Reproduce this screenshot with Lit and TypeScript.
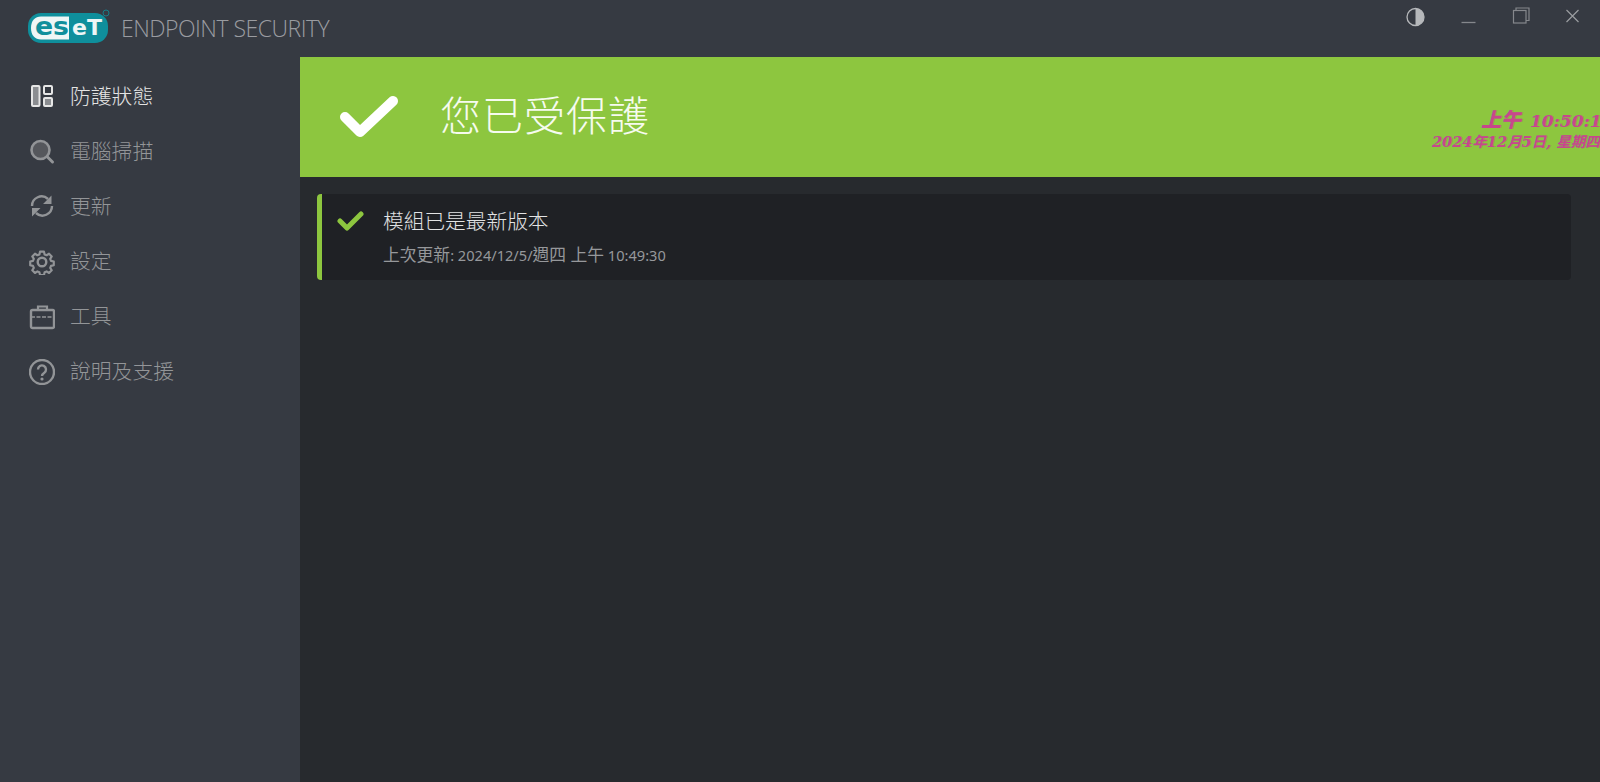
import {LitElement, html, css, svg} from 'lit';
import {customElement} from 'lit/decorators.js';

const navIcons = {
  status: svg`<rect x="3" y="2" width="7.500" height="20" rx="1" fill="#8b8d91" stroke="#e6e6e6" stroke-width="2"/><rect x="15" y="2" width="8" height="8" rx="1" fill="none" stroke="#e6e6e6" stroke-width="2"/><rect x="15" y="14" width="8" height="8" rx="1" fill="#8b8d91" stroke="#e6e6e6" stroke-width="2"/>`,
  scan: svg`<circle cx="11.500" cy="11" r="9" fill="#55575c" stroke="#929497" stroke-width="2.600"/><path d="M18.500 18l5 5" stroke="#929497" stroke-width="3" stroke-linecap="round"/>`,
  update: svg`<path d="M3 12a9.500 9.500 0 0 1 16-7M23 12a9.500 9.500 0 0 1-16 7" fill="none" stroke="#929497" stroke-width="2.400"/><path d="M22.500 1.500V10H14zM3 22.500V14h8.500z" fill="#929497"/>`,
  gear: svg`<circle cx="13" cy="13" r="4.300" fill="none" stroke="#929497" stroke-width="2.400"/><path d="M10.800 1.500h4.400l.7 3.100 2.200.9 2.700-1.700 3 3-1.700 2.700.9 2.200 3.100.7v4.200l-3.100.7-.9 2.200 1.700 2.700-3 3-2.700-1.700-2.200.9-.7 3.100h-4.400l-.7-3.100-2.200-.9-2.700 1.700-3-3 1.700-2.700-.9-2.200-3.100-.7v-4.200l3.100-.7.9-2.200-1.700-2.700 3-3 2.700 1.700 2.200-.9z" transform="translate(1.300 1.300) scale(.9)" fill="none" stroke="#929497" stroke-width="2.400" stroke-linejoin="round"/>`,
  tools: svg`<path d="M9 6V2.500h9V6" fill="none" stroke="#929497" stroke-width="2.200"/><rect x="2" y="6" width="23" height="18" rx="1.500" fill="none" stroke="#929497" stroke-width="2.400"/><path d="M2 13h23" stroke="#929497" stroke-width="1.500" stroke-dasharray="4 1.500"/>`,
  help: svg`<circle cx="13" cy="13" r="12" fill="none" stroke="#929497" stroke-width="2.400"/><path d="M9 10.500a4 4 0 1 1 6.300 3.200c-1.500 1-2.300 1.600-2.300 3.300" fill="none" stroke="#929497" stroke-width="2.400"/><circle cx="13" cy="20" r="1.600" fill="#929497"/>`,
};

const navItems = [
  {label: '防護狀態', icon: navIcons.status, active: true},
  {label: '電腦掃描', icon: navIcons.scan},
  {label: '更新', icon: navIcons.update},
  {label: '設定', icon: navIcons.gear},
  {label: '工具', icon: navIcons.tools},
  {label: '說明及支援', icon: navIcons.help},
];

@customElement('app-root')
class AppRoot extends LitElement {
  static override styles = css`
    :host {
      display: block;
      width: 1600px;
      height: 782px;
      overflow: hidden;
      font-family: 'Noto Sans', 'Noto Sans CJK TC', sans-serif;
      background: #272a2e;
    }

    .titlebar {
      height: 57px;
      background: #363a42;
      display: flex;
      align-items: center;
      padding-left: 28px;
    }

    .logo {
      width: 84px;
      height: 34px;
      margin-top: -5px;
      display: block;
      flex: none;
    }

    .product {
      margin-left: 9px;
      margin-top: -1px;
      font-family: 'Open Sans', sans-serif;
      font-weight: 300;
      font-size: 23px;
      letter-spacing: -0.5px;
      color: #9a9ca1;
    }

    .window-controls {
      margin-left: auto;
      display: flex;
      align-self: flex-start;
      padding-top: 7px;
      padding-right: 1px;
    }

    .window-controls svg {
      display: block;
      width: 53px;
      height: 20px;
    }

    .body {
      display: flex;
      height: 725px;
    }

    .sidebar {
      width: 300px;
      flex: none;
      background: #363a42;
      padding-top: 11px;
      box-sizing: border-box;
    }

    .nav-item {
      height: 55px;
      display: flex;
      align-items: center;
      padding-left: 29px;
      color: #939598;
      font-size: 20.800px;
      font-weight: 300;
    }

    .nav-item.active {
      color: #e4e4e4;
    }

    .nav-item span {
      margin-top: -2px;
    }

    .nav-icon {
      width: 26px;
      height: 26px;
      margin-right: 15px;
      margin-top: 2px;
      flex: none;
    }

    .main {
      flex: 1;
      min-width: 0;
    }

    .hero {
      height: 120px;
      background: #8dc63f;
      display: flex;
      align-items: center;
      padding-left: 39px;
      position: relative;
      overflow: hidden;
    }

    .hero-title {
      margin-left: 41px;
      margin-top: -9px;
      font-size: 41px;
      font-weight: 300;
      color: #f6fbef;
      letter-spacing: 1px;
    }

    .clock {
      position: absolute;
      left: 1132px;
      top: 53px;
      width: 300px;
      font-family: 'DejaVu Serif', 'Noto Sans CJK TC', serif;
      font-weight: bold;
      font-style: italic;
      color: #c8478c;
      text-shadow: 1px 0 0 rgba(122, 84, 176, 0.35);
      white-space: nowrap;
      line-height: 1;
    }

    .clock-time {
      font-size: 17px;
      padding-left: 49px;
    }

    .clock-time b {
      font-size: 20px;
      margin-right: 3px;
    }

    .clock-date {
      font-size: 14.500px;
      margin-top: 5px;
    }

    .card {
      margin: 17px 29px 0 17px;
      height: 86px;
      box-sizing: border-box;
      background: #1f2125;
      border-left: 5px solid #8dc63f;
      border-radius: 4px;
      display: flex;
      padding-left: 15px;
    }

    .card-check {
      margin-top: 16px;
      flex: none;
    }

    .card-text {
      margin-left: 19px;
      padding-top: 14px;
    }

    .card-title {
      font-size: 20.700px;
      line-height: 26px;
      color: #e2e3e4;
      font-weight: 300;
    }

    .card-sub {
      margin-top: 11px;
      font-size: 14.600px;
      line-height: 20px;
      color: #96989b;
    }

    .card-sub span {
      font-size: 16.800px;
    }
  `;

  override render() {
    return html`
      <div class="titlebar">
        <svg class="logo" viewBox="0 0 84 34">
          <rect x="0" y="4" width="80" height="30" rx="13" fill="#0f8f9c"/>
          <path d="M13 7.500h28v23H13c-6 0-10-4-10-11.500S7 7.500 13 7.500z" fill="#eef6f6"/>
          <circle cx="78" cy="4" r="3" fill="none" stroke="#0f8f9c" stroke-width=".8"/>
          <text x="7" y="26" font-family="DejaVu Sans" font-weight="700" font-size="24" fill="#0f8f9c" textLength="34" lengthAdjust="spacingAndGlyphs">es</text>
          <text x="44" y="26" font-family="DejaVu Sans" font-weight="700" font-size="22" fill="#eef6f6" textLength="30" lengthAdjust="spacingAndGlyphs">eT</text>
        </svg>
        <span class="product">ENDPOINT SECURITY</span>
        <div class="window-controls">
          <svg viewBox="-18.500 0 53 20">
            <circle cx="10" cy="10" r="8.500" fill="none" stroke="#b6b8bb" stroke-width="1.300"/>
            <path d="M10 1.500a8.500 8.500 0 0 1 0 17z" fill="#b6b8bb"/>
          </svg>
          <svg viewBox="-20.500 0 53 20">
            <path d="M1 15.500h14" stroke="#85878c" stroke-width="1.300"/>
          </svg>
          <svg viewBox="-19 0 53 20">
            <rect x="1.500" y="3.500" width="12.500" height="12.500" fill="none" stroke="#85878c" stroke-width="1.200"/>
            <path d="M4 3.500V1h13v12.500h-3" fill="none" stroke="#85878c" stroke-width="1.200"/>
          </svg>
          <svg viewBox="-19.500 0 53 20">
            <path d="M1 3l12 12M13 3L1 15" stroke="#9a9ca0" stroke-width="1.200"/>
          </svg>
        </div>
      </div>
      <div class="body">
        <nav class="sidebar">
          ${navItems.map(
            (item) => html`
              <div class="nav-item ${item.active ? 'active' : ''}">
                <svg class="nav-icon" viewBox="0 0 26 26">${item.icon}</svg>
                <span>${item.label}</span>
              </div>
            `,
          )}
        </nav>
        <main class="main">
          <div class="hero">
            <svg width="60" height="46" viewBox="0 0 60 46">
              <path d="M6 23l15 15L54 7" fill="none" stroke="#fff" stroke-width="10" stroke-linecap="round" stroke-linejoin="round"/>
            </svg>
            <div class="hero-title">您已受保護</div>
            <div class="clock">
              <div class="clock-time"><b>上午</b> 10:50:18</div>
              <div class="clock-date">2024年12月5日, 星期四</div>
            </div>
          </div>
          <div class="card">
            <svg class="card-check" width="27" height="21" viewBox="0 0 27 21">
              <path d="M3 11l7 7L24 4" fill="none" stroke="#8dc63f" stroke-width="5" stroke-linecap="round" stroke-linejoin="round"/>
            </svg>
            <div class="card-text">
              <div class="card-title">模組已是最新版本</div>
              <div class="card-sub"><span>上次更新</span>: 2024/12/5/<span>週四 上午</span> 10:49:30</div>
            </div>
          </div>
        </main>
      </div>
    `;
  }
}

declare global {
  interface HTMLElementTagNameMap {
    'app-root': AppRoot;
  }
}
